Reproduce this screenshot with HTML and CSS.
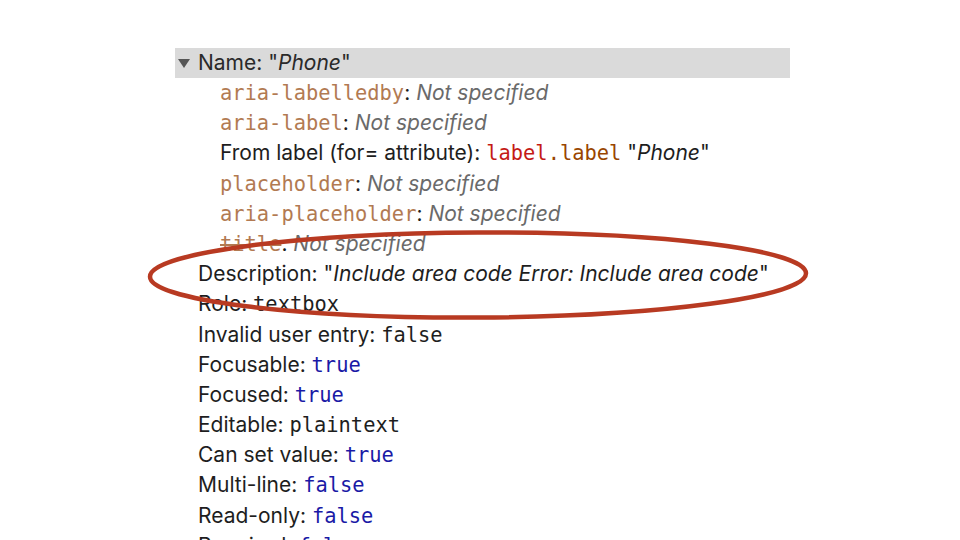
FILE: index.html
```html
<!DOCTYPE html>
<html>
<head>
<meta charset="utf-8">
<link rel="stylesheet" href="styles.css">
</head>
<body>
<div class="page">
  <div class="tree">
    <div class="row header"><span class="tri"></span>Name: "<i>Phone</i>"</div>
    <div class="row l2"><span class="attr">aria-labelledby</span>: <i class="ns">Not specified</i></div>
    <div class="row l2"><span class="attr">aria-label</span>: <i class="ns">Not specified</i></div>
    <div class="row l2">From label (for= attribute): <span class="tag">label</span><span class="cls">.label</span> "<i>Phone</i>"</div>
    <div class="row l2"><span class="attr">placeholder</span>: <i class="ns">Not specified</i></div>
    <div class="row l2"><span class="attr">aria-placeholder</span>: <i class="ns">Not specified</i></div>
    <div class="row l2"><span class="attr strike">title</span>: <i class="ns">Not specified</i></div>
    <div class="row l1">Description: "<i>Include area code Error: Include area code</i>"</div>
    <div class="row l1">Role: <span class="mono">textbox</span></div>
    <div class="row l1">Invalid user entry: <span class="mono">false</span></div>
    <div class="row l1">Focusable: <span class="mono val">true</span></div>
    <div class="row l1">Focused: <span class="mono val">true</span></div>
    <div class="row l1">Editable: <span class="mono">plaintext</span></div>
    <div class="row l1">Can set value: <span class="mono val">true</span></div>
    <div class="row l1">Multi-line: <span class="mono val">false</span></div>
    <div class="row l1">Read-only: <span class="mono val">false</span></div>
    <div class="row l1">Required: <span class="mono val">false</span></div>
  </div>
  <svg class="ring" width="960" height="540" viewBox="0 0 960 540">
    <ellipse cx="478" cy="275" rx="328" ry="42.5" fill="none" stroke="#b83a22" stroke-width="4.5" transform="rotate(-0.3 478 275)"/>
  </svg>
</div>
</body>
</html>
```

FILE: styles.css
```css
html, body {
  margin: 0;
  padding: 0;
  background: #ffffff;
}
.page {
  position: relative;
  width: 960px;
  height: 540px;
  overflow: hidden;
}
.tree {
  margin-left: 175px;
  padding-top: 48px;
  width: 615px;
  font-family: Inter, "Liberation Sans", Arial, sans-serif;
  font-size: 21px;
  color: #1e1e1e;
}
.row {
  height: 30.2px;
  line-height: 30.2px;
  white-space: pre;
}
.header {
  background: #dadada;
  height: 30px;
  line-height: 30px;
  padding-left: 3px;
  color: #2a2a2a;
}
.tri {
  display: inline-block;
  width: 0;
  height: 0;
  border-left: 6px solid transparent;
  border-right: 6px solid transparent;
  border-top: 9px solid #555555;
  margin-right: 8px;
  vertical-align: 2px;
}
.l1 { padding-left: 23px; }
.l2 { padding-left: 45px; }
i { font-style: italic; }
.ns { color: #6a6a6a; }
.attr, .mono, .tag, .cls {
  font-family: "DejaVu Sans Mono", Menlo, monospace;
  font-size: 20.4px;
}
.attr { color: #b27a52; }
.strike { text-decoration: line-through; text-decoration-color: #b27a52; }
.tag { color: #c41a16; }
.cls { color: #994500; }
.mono { color: #1e1e1e; }
.val { color: #1a1aa6; }
.ring {
  position: absolute;
  left: 0;
  top: 0;
  pointer-events: none;
}
```
